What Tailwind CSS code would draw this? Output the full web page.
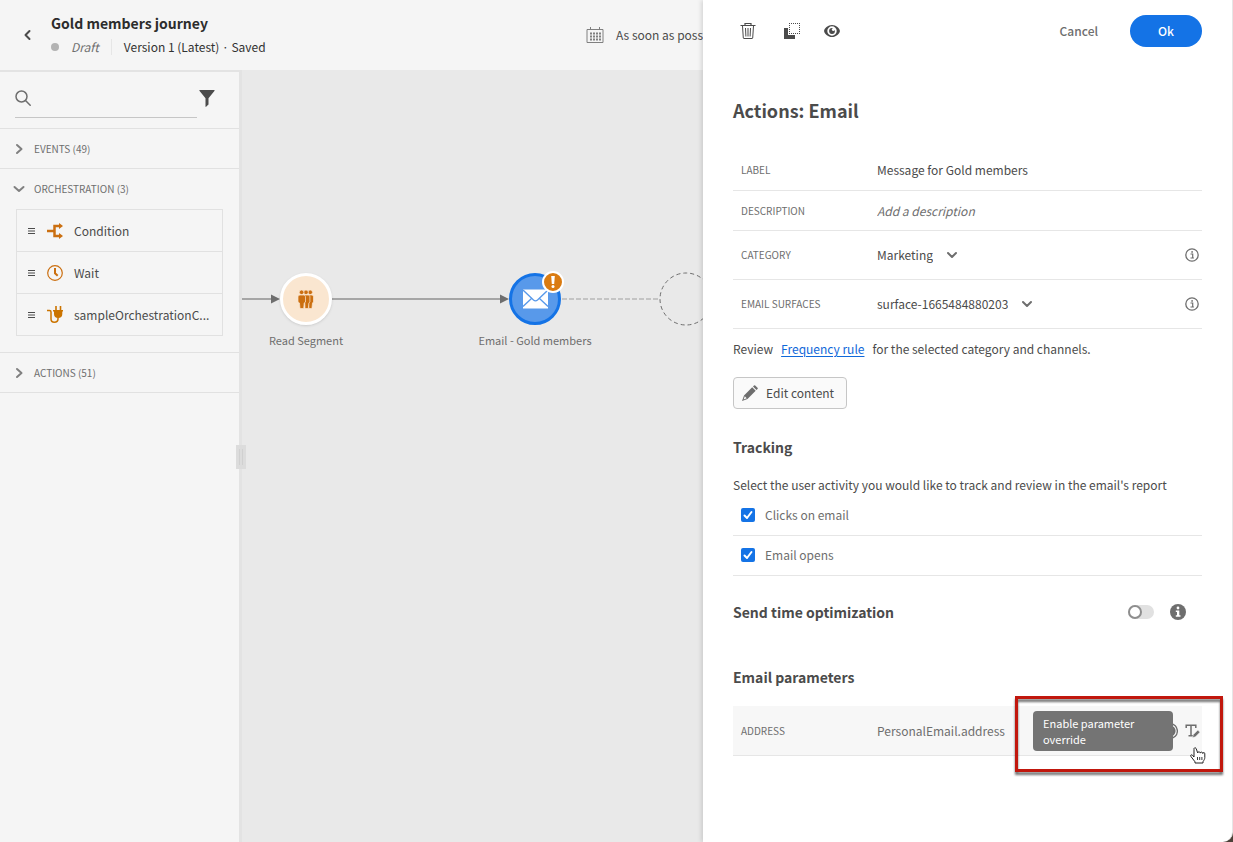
<!DOCTYPE html>
<html lang="en">
<head>
<meta charset="utf-8">
<meta name="viewport" content="width=device-width, initial-scale=1">
<title>Gold members journey</title>
<script src="https://cdn.jsdelivr.net/npm/@tailwindcss/browser@4"></script>
</head>
<body class="flex h-screen overflow-hidden bg-[#4d4239] font-['Noto_Sans_CJK_JP',sans-serif] text-xs leading-5 text-[#4b4b4b]">

<!-- Journey: header, palette and canvas -->
<div class="flex min-w-0 flex-1 flex-col overflow-hidden bg-[#e9e9e9]">
  <header class="flex h-[70px] shrink-0 items-center justify-between bg-[#f5f5f5]">
    <div class="flex items-center pl-4">
      <button type="button" aria-label="Back" class="flex w-6 justify-center">
        <svg class="size-3" viewBox="0 0 12 12" fill="none" stroke="#4b4b4b" stroke-width="2" stroke-linecap="round" stroke-linejoin="round"><path d="M7.500 2 3.500 6l4 4"/></svg>
      </button>
      <div class="flex flex-col gap-[2px] pb-[2px] pl-[11px]">
        <h1 class="text-sm leading-6 font-bold whitespace-nowrap text-[#2c2c2c]">Gold members journey</h1>
        <div class="flex items-center whitespace-nowrap">
          <span class="size-2 rounded-full bg-[#b3b3b3]"></span>
          <span class="pl-3 text-[#6e6e6e] italic">Draft</span>
          <span class="ml-3 h-4 w-px bg-[#e6e6e6]"></span>
          <span class="pl-3 text-[#323232]">Version 1 (Latest) · Saved</span>
        </div>
      </div>
    </div>
    <div class="flex w-[117px] shrink-0 items-center gap-3 overflow-hidden">
      <svg class="size-[18px] shrink-0" viewBox="0 0 18 18" fill="none" stroke="#808080"><path d="M1 3.500h16v13H1zM4.500 1v3M13.500 1v3"/><path d="M4 7.500h11M4 10.500h11M4 13.500h11" stroke-width="2" stroke-dasharray="2 1"/></svg>
      <span class="whitespace-nowrap">As soon as possible</span>
    </div>
  </header>

  <div class="flex min-h-0 flex-1">
    <nav class="relative w-[242px] shrink-0 border-t-2 border-r-3 border-[#e3e3e3] bg-[#f5f5f5] text-[#6e6e6e]">
      <div class="flex h-14 items-start justify-between pt-[9px] pr-6 pl-[15px]">
        <label class="flex h-[37px] w-[182px] items-center border-b border-[#c6c6c6] pb-[2px]">
          <svg class="size-4 shrink-0" viewBox="0 0 16 16" fill="none" stroke="#6e6e6e" stroke-width="1.500" stroke-linecap="round"><circle cx="6.500" cy="6.500" r="5.500"/><path d="m10.500 10.500 4.700 4.700"/></svg>
          <input type="search" aria-label="Search" class="min-w-0 flex-1 bg-transparent px-2 outline-none">
        </label>
        <button type="button" aria-label="Filter" class="mt-[9px]">
          <svg class="h-[17px] w-4" viewBox="0 0 16 17" fill="#4b4b4b"><path d="M1 0h14c.6 0 .8.600.4 1L9.500 8.300v6.200l-2.400 2.300c-.3.200-.6.100-.6-.3V8.300L.6 1C.2.600.4 0 1 0z"/></svg>
        </button>
      </div>

      <section class="border-t border-[#e1e1e1]">
        <button type="button" class="flex h-[39px] w-full items-center gap-[9px] pl-[13px] text-[10px]">
          <svg class="size-3" viewBox="0 0 12 12" fill="none" stroke="#808080" stroke-width="2" stroke-linecap="round" stroke-linejoin="round"><path d="m4 2 4.500 4L4 10"/></svg>
          EVENTS (49)
        </button>
      </section>

      <section class="border-t border-[#e1e1e1] pb-4">
        <button type="button" class="flex h-10 w-full items-center gap-[9px] pl-[13px] text-[10px]">
          <svg class="size-3" viewBox="0 0 12 12" fill="none" stroke="#808080" stroke-width="2" stroke-linecap="round" stroke-linejoin="round"><path d="m1.500 4 4.500 4 4.500-4"/></svg>
          ORCHESTRATION (3)
        </button>
        <ul class="mx-4 divide-y divide-[#e1e1e1] border border-[#e1e1e1] text-[#4b4b4b]">
          <li class="flex h-[42px] items-center pl-[11px]">
            <svg class="h-[6px] w-[7px] shrink-0" viewBox="0 0 7 6" stroke="#4b4b4b"><path d="M0 .5h7M0 3h7M0 5.500h7"/></svg>
            <svg class="ml-3 size-4 shrink-0" viewBox="0 0 16 16" fill="none" stroke="#cb6f10" stroke-width="2.500"><path d="M0 8h7M13 3H7.500v10H13"/><path d="M12 0v6l4-3zM12 10v6l4-3z" fill="#cb6f10" stroke="none"/></svg>
            <span class="ml-[11px]">Condition</span>
          </li>
          <li class="flex h-[42px] items-center pl-[11px]">
            <svg class="h-[6px] w-[7px] shrink-0" viewBox="0 0 7 6" stroke="#4b4b4b"><path d="M0 .5h7M0 3h7M0 5.500h7"/></svg>
            <svg class="ml-3 size-4 shrink-0" viewBox="0 0 16 16" fill="none" stroke="#cb6f10"><circle cx="8" cy="8" r="7.300" stroke-width="1.200"/><path d="M8 3v5.200l2.700 2.600" stroke-width="2"/></svg>
            <span class="ml-[11px]">Wait</span>
          </li>
          <li class="flex h-[41px] items-center pl-[11px]">
            <svg class="h-[6px] w-[7px] shrink-0" viewBox="0 0 7 6" stroke="#4b4b4b"><path d="M0 .5h7M0 3h7M0 5.500h7"/></svg>
            <svg class="ml-3 h-[17px] w-4 shrink-0" viewBox="0 0 16 17" fill="none" stroke="#cb7400"><path d="M0 4.500h2.500c1 0 1.500.600 1.500 1.600V13c0 2 1.200 3.200 3.300 3.200 2.400 0 3.700-1.200 3.700-3.200v-1.500" stroke-width="1.500"/><path d="M9 0v5M13.500 0v5" stroke-width="1.600"/><path d="M6 4h10v1.500h-.7V8c0 2.600-1.500 4-4.100 4S7 10.600 7 8V5.500H6z" fill="#cb7400" stroke="none"/></svg>
            <span class="ml-[11px]">sampleOrchestrationC...</span>
          </li>
        </ul>
      </section>

      <section class="border-y border-[#e1e1e1]">
        <button type="button" class="flex h-[39px] w-full items-center gap-[9px] pl-[13px] text-[10px]">
          <svg class="size-3" viewBox="0 0 12 12" fill="none" stroke="#808080" stroke-width="2" stroke-linecap="round" stroke-linejoin="round"><path d="m4 2 4.500 4L4 10"/></svg>
          ACTIONS (51)
        </button>
      </section>

      <!-- Palette resize handle -->
      <span class="absolute top-[373px] -right-[7px] flex h-6 w-[10px] items-center justify-center gap-[2px] bg-[#dcdcdc]"><i class="h-4 w-px bg-[#d0d0d0]"></i><i class="h-4 w-px bg-[#d0d0d0]"></i></span>
    </nav>

    <main class="relative min-w-0 flex-1 overflow-hidden text-[11px] leading-4 text-[#6e6e6e]">
      <svg class="absolute top-0 left-0 h-[300px] w-[500px]" viewBox="242 70 500 300" fill="none">
        <path d="M242 299h30M332 299h170" stroke="#a6a6a6" stroke-width="2"/>
        <path d="M271 294.500v9l9-4.500zM500 294.500v9l9-4.500z" fill="#6e6e6e"/>
        <path d="M562 299h98" stroke="#c4c4c4" stroke-width="2" stroke-dasharray="5 2"/>
        <circle cx="686" cy="299" r="26" stroke="#6e6e6e" stroke-dasharray="4 3"/>
      </svg>

      <div class="absolute top-[203px] left-[4px] flex w-[120px] flex-col items-center">
        <span class="flex size-[52px] items-center justify-center rounded-full border-3 border-white bg-[#fae6d0] shadow-sm">
          <svg class="h-[19px] w-4" viewBox="0 0 16 19" fill="#cb6f10" stroke="#fae6d0" stroke-width=".7"><circle cx="12.200" cy="2.300" r="2.300"/><path d="M10 5h3.500c1.300 0 2 .7 2 2v5l-1 1-.6 5.500h-3z"/><circle cx="8" cy="2.300" r="2.300"/><path d="M6.500 5H10c1.200 0 1.900.7 1.900 2v5l-1 1-.6 5.500H7z"/><circle cx="3.600" cy="2.300" r="2.300"/><path d="M2.200 5H5.500c1.300 0 2 .8 2 2v5l-1.300 1-.5 5.500H2L1.500 13 0 12V7c0-1.200.9-2 2.200-2z"/></svg>
        </span>
        <span class="pt-[7px] whitespace-nowrap">Read Segment</span>
      </div>

      <div class="absolute top-[203px] left-[223px] flex w-[140px] flex-col items-center">
        <span class="relative flex size-[52px] items-center justify-center rounded-full border-3 border-[#1473e6] bg-[#5899ea]">
          <svg class="h-5 w-[25px]" viewBox="0 0 25 20" fill="none"><path d="M0 .5h25v19H0z" fill="#fff"/><path d="m0 1 10.500 10q2 1.800 4 0L25 1M0 17.500 8.500 9.500M25 17.500l-8.500-8" stroke="#5899ea" stroke-width="1.300"/></svg>
          <span class="absolute -top-[5px] -right-[6px] flex size-[22px] items-center justify-center rounded-full border-2 border-white bg-[#da7b11]">
            <svg class="h-3 w-1" viewBox="0 0 4 12" fill="#fff"><path d="M.2 0h3.600l-.6 8H.8z"/><circle cx="2" cy="10.500" r="1.500"/></svg>
          </span>
        </span>
        <span class="pt-[7px] whitespace-nowrap">Email - Gold members</span>
      </div>
    </main>
  </div>
</div>

<!-- Activity settings -->
<aside class="relative z-10 flex w-[530px] shrink-0 flex-col rounded-br-[10px] border-r border-[#e6e6e6] bg-white pr-[30px] pl-[30px] shadow-[-2px_0_4px_rgba(0,0,0,0.12)]">
  <div class="flex h-[62px] shrink-0 items-center">
    <div class="flex items-center gap-[22px] pl-[2px]">
      <button type="button" aria-label="Delete" class="flex w-[26px] items-center justify-center">
        <svg class="size-4" viewBox="0 0 16 16" fill="none" stroke="#4b4b4b"><path d="M.5 2.500h15M5 2.500v-2h6v2" stroke-width="1.200"/><path d="m2.500 3 .8 12q.1.500.6.500h8.200q.5 0 .6-.5l.8-12M5.500 5l.4 8.500M8 5v8.500M10.500 5l-.4 8.500"/></svg>
      </button>
      <button type="button" aria-label="Copy" class="flex size-[18px] items-center justify-center">
        <svg class="size-4" viewBox="0 0 16 16" fill="none"><path d="M0 5h4v7h7v4H0z" fill="#4b4b4b"/><path d="M5 .5h11M5 10.500h11M5.500 0v11M15.500 0v11" stroke="#4b4b4b" stroke-dasharray="1 1"/></svg>
      </button>
      <button type="button" aria-label="Preview" class="flex size-[18px] items-center justify-center">
        <svg class="h-3 w-4" viewBox="0 0 16 12" fill="none"><path fill-rule="evenodd" fill="#4b4b4b" d="M8 0c4 0 7.900 3.700 7.900 5.900S12 12 8 12 .1 8.200.1 5.900 4 0 8 0zm0 1.300a4.700 4.700 0 1 0 0 9.400 4.700 4.700 0 0 0 0-9.400z"/><path fill="#4b4b4b" d="M8 3.100c.4 0 .8.100 1 .2-.9.200-1.200.8-1.200 1.300 0 .8.600 1.400 1.400 1.400.7 0 1.200-.4 1.500-1l.2.900A2.900 2.900 0 1 1 8 3.100z"/></svg>
      </button>
    </div>
    <div class="ml-auto flex items-center gap-8 font-medium">
      <button type="button" class="text-[#6e6e6e]">Cancel</button>
      <button type="button" class="h-8 w-[72px] rounded-full bg-[#1473e6] text-white">Ok</button>
    </div>
  </div>

  <h2 class="pt-8 text-lg leading-8 font-bold">Actions: Email</h2>

  <div class="mt-6 flex flex-col">
    <div class="flex h-[41px] items-center border-b border-[#e6e6e6] pl-2">
      <label for="f-label" class="w-[136px] shrink-0 text-[10px] text-[#6e6e6e]">LABEL</label>
      <input id="f-label" type="text" value="Message for Gold members" class="min-w-0 flex-1 outline-none">
    </div>
    <div class="flex h-10 items-center border-b border-[#e6e6e6] pl-2">
      <label for="f-desc" class="w-[136px] shrink-0 text-[10px] text-[#6e6e6e]">DESCRIPTION</label>
      <input id="f-desc" type="text" placeholder="Add a description" class="min-w-0 flex-1 outline-none placeholder:text-[#6e6e6e] placeholder:italic">
    </div>
    <div class="flex h-[49px] items-center border-b border-[#e6e6e6] pr-[3px] pl-2">
      <label for="f-cat" class="w-[136px] shrink-0 text-[10px] text-[#6e6e6e]">CATEGORY</label>
      <span class="flex items-center gap-[14px]">
        <select id="f-cat" class="field-sizing-content appearance-none bg-transparent outline-none"><option>Marketing</option></select>
        <svg class="size-[10px]" viewBox="0 0 10 10" fill="none" stroke="#6e6e6e" stroke-width="2" stroke-linecap="round" stroke-linejoin="round"><path d="m1 3 4 4 4-4"/></svg>
      </span>
      <button type="button" aria-label="About category" class="ml-auto">
        <svg class="size-[14px]" viewBox="0 0 14 14" fill="none"><circle cx="7" cy="7" r="6.200" stroke="#6e6e6e" stroke-width="1.300"/><path d="M5.500 6h2.200v3.500M5.500 10h3.400" stroke="#6e6e6e" stroke-width="1.200"/><circle cx="7.100" cy="3.900" r=".9" fill="#6e6e6e"/></svg>
      </button>
    </div>
    <div class="flex h-[49px] items-center border-b border-[#e6e6e6] pr-[3px] pl-2">
      <label for="f-surf" class="w-[136px] shrink-0 text-[10px] text-[#6e6e6e]">EMAIL SURFACES</label>
      <span class="flex items-center gap-[14px]">
        <select id="f-surf" class="field-sizing-content appearance-none bg-transparent outline-none"><option>surface-1665484880203</option></select>
        <svg class="size-[10px]" viewBox="0 0 10 10" fill="none" stroke="#6e6e6e" stroke-width="2" stroke-linecap="round" stroke-linejoin="round"><path d="m1 3 4 4 4-4"/></svg>
      </span>
      <button type="button" aria-label="About email surfaces" class="ml-auto">
        <svg class="size-[14px]" viewBox="0 0 14 14" fill="none"><circle cx="7" cy="7" r="6.200" stroke="#6e6e6e" stroke-width="1.300"/><path d="M5.500 6h2.200v3.500M5.500 10h3.400" stroke="#6e6e6e" stroke-width="1.200"/><circle cx="7.100" cy="3.900" r=".9" fill="#6e6e6e"/></svg>
      </button>
    </div>
  </div>

  <p class="mt-[10px] flex gap-2 whitespace-nowrap">Review <a href="#" class="text-[#1068d9] underline underline-offset-2">Frequency rule</a> for the selected category and channels.</p>

  <button type="button" class="mt-[18px] flex h-8 w-[114px] items-center gap-2 rounded border border-[#c6c6c6] bg-[#fafafa] pl-2 whitespace-nowrap">
    <svg class="size-4 shrink-0" viewBox="0 0 16 16" fill="#6e6e6e"><path d="m11 1.500 1-1q.6-.6 1.200 0l2.300 2.300q.6.600 0 1.200l-1 1zM10.200 2.300l3.500 3.500-8.200 8.200L0 16l2-5.500zM2.800 11.300 1.600 14.400l3.100-1.200z" fill-rule="evenodd"/></svg>
    Edit content
  </button>

  <h3 class="mt-[26px] text-sm leading-6 font-bold">Tracking</h3>
  <p class="mt-4 whitespace-nowrap">Select the user activity you would like to track and review in the email's report</p>
  <div class="pt-px text-[#6e6e6e]">
    <label class="flex h-10 items-center gap-[10px] border-b border-[#e6e6e6] pb-[2px] pl-2">
      <span class="relative flex size-[14px]">
        <input type="checkbox" checked class="size-[14px] appearance-none rounded-xs bg-[#1473e6]">
        <svg class="pointer-events-none absolute inset-0" viewBox="0 0 14 14" fill="none" stroke="#fff" stroke-width="2" stroke-linecap="round" stroke-linejoin="round"><path d="m3.500 7.500 2.500 2.500 4.500-6"/></svg>
      </span>
      Clicks on email
    </label>
    <label class="flex h-10 items-center gap-[10px] border-b border-[#e6e6e6] pb-[2px] pl-2">
      <span class="relative flex size-[14px]">
        <input type="checkbox" checked class="size-[14px] appearance-none rounded-xs bg-[#1473e6]">
        <svg class="pointer-events-none absolute inset-0" viewBox="0 0 14 14" fill="none" stroke="#fff" stroke-width="2" stroke-linecap="round" stroke-linejoin="round"><path d="m3.500 7.500 2.500 2.500 4.500-6"/></svg>
      </span>
      Email opens
    </label>
  </div>

  <div class="mt-6 flex items-center pr-4">
    <label for="f-sto" class="text-sm leading-6 font-bold">Send time optimization</label>
    <input id="f-sto" type="checkbox" role="switch" class="ml-auto h-[14px] w-[26px] appearance-none rounded-full bg-[#e1e1e1] before:block before:size-[14px] before:rounded-full before:border-2 before:border-[#8e8e8e] before:bg-white">
    <button type="button" aria-label="About send time optimization" class="ml-4">
      <svg class="size-4" viewBox="0 0 16 16"><circle cx="8" cy="8" r="8" fill="#6e6e6e"/><circle cx="8" cy="4" r="1.400" fill="#fff"/><path d="M5.800 6.500h3.500v4.700h1.200v1.600H5.800v-1.600H7V8H5.800z" fill="#fff"/></svg>
    </button>
  </div>

  <h3 class="mt-[41px] text-sm leading-6 font-bold">Email parameters</h3>
  <div class="relative mt-[17px] flex h-[50px] shrink-0 items-center border-b border-[#e6e6e6] bg-[#f7f7f7] pl-2 text-[#6e6e6e]">
    <label for="f-addr" class="w-[136px] shrink-0 text-[10px]">ADDRESS</label>
    <input id="f-addr" type="text" value="PersonalEmail.address" class="min-w-0 flex-1 bg-transparent text-[#6e6e6e] outline-none">
    <div class="flex items-center gap-[7px] pr-[2px]">
      <svg class="size-4" viewBox="0 0 16 16" fill="none" stroke="#6e6e6e"><circle cx="8" cy="8" r="7.400" stroke-width="1.300"/><circle cx="8" cy="8" r="5.600" fill="#6e6e6e" stroke="none"/></svg>
      <button type="button" aria-label="Enable parameter override" aria-describedby="tip">
        <svg class="h-[14px] w-[15px]" viewBox="0 0 15 14" fill="none" stroke="#6e6e6e"><path d="M1.200 4V1.200h9.600V4M6 1.200v10.300M3.500 11.700h4.500" stroke-width="1.500"/><path d="m7.500 13.800.8-3.200 4-4q.5-.5 1 0l1.200 1.200q.5.500 0 1l-4 4z" fill="#6e6e6e" stroke="#f7f7f7" stroke-width=".6"/></svg>
      </button>
    </div>

    <div id="tip" role="tooltip" class="absolute top-[5px] right-[29px] w-[140px] rounded bg-[#747474] px-[10px] py-1 text-[11px] leading-4 text-white">Enable parameter override</div>
    <div class="pointer-events-none absolute -top-[10px] -right-[21px] h-[76px] w-[208px] border-3 border-[#c1170d] drop-shadow-[0_3px_1px_rgba(0,0,0,0.55)]"></div>
    <svg class="pointer-events-none absolute top-[41px] -right-[4px] h-[17px] w-4" viewBox="0 0 16 17" fill="#fff" stroke="#222" stroke-linejoin="round"><path d="M4 10 2.500 8.300C1.400 7.200 0 8.200 1 9.600l4 5.200V16h8v-1.300c1-1.500 1.800-2.700 1.800-4.200V6.700c0-1.500-1.900-1.500-2-.2 0-1.700-2.400-1.800-2.500-.4 0-1.600-2.500-1.600-2.600-.2L6.300 2C5.900.200 3.600.500 4 2.300z"/><path d="M7.500 10v3M9.700 10v3M11.900 10v3" stroke-width=".9"/></svg>
  </div>
</aside>
</body>
</html>
